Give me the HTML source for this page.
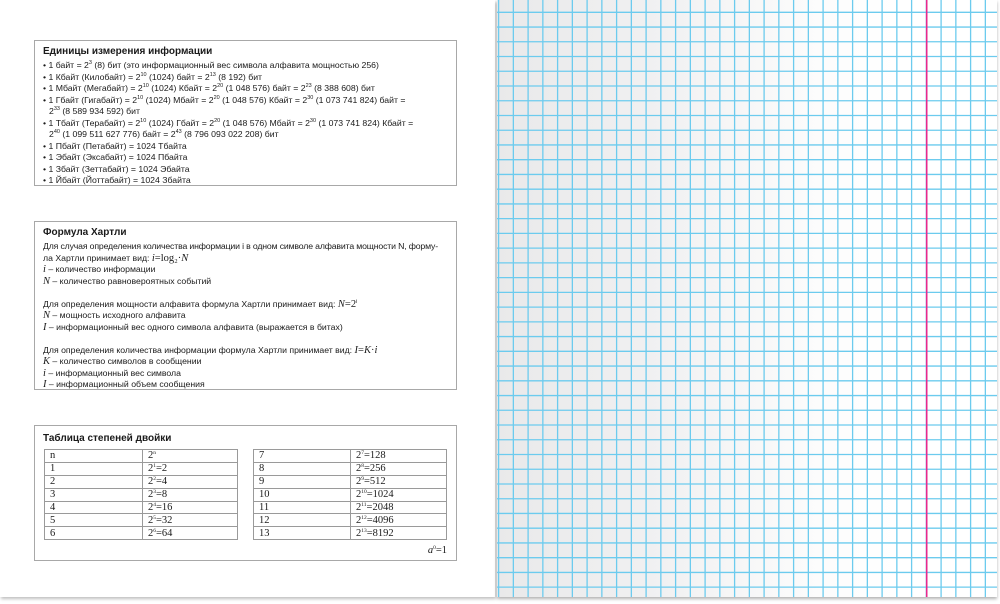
<!DOCTYPE html>
<html><head><meta charset="utf-8"><style>
*{margin:0;padding:0;box-sizing:border-box}
body{width:1000px;height:604px;background:#fff;position:relative;overflow:hidden;font-family:"Liberation Sans","DejaVu Sans",sans-serif;color:#1a1a1a}
.left{position:absolute;left:0;top:0;width:495px;height:597px;background:#fff;box-shadow:1px 2px 3px rgba(0,0,0,.25)}
.box{position:absolute;left:34px;width:423px;border:1px solid #a8a8a8;background:#fff;font-size:8.7px;line-height:11.5px;padding:4px 8px 0 8px;white-space:nowrap}
.box div,.box li{height:11.5px;overflow:visible}
.box h3{font-size:10px;font-weight:bold;margin:0 0 1px 0;line-height:14px}
.box ul{list-style:none}
.box li:before{content:"• ";}
.ind{padding-left:6px}
sup{font-size:5.5px;line-height:0;vertical-align:4px}
.m{font-family:"Liberation Serif","DejaVu Serif",serif;font-style:italic;font-size:10.5px;line-height:0}
.mr{font-family:"Liberation Serif",serif;font-size:10.5px;line-height:0}
table{position:absolute;border-collapse:collapse;font-family:"Liberation Serif",serif;font-size:10.5px}
td{border:1px solid #9a9a9a;height:12.9px;line-height:11px;padding:0 0 0 5px;vertical-align:middle}
.right{position:absolute;left:497px;top:0;width:500px;height:597px;background:linear-gradient(90deg,#e9e9ea 0%,#f0f0f1 30%,#fcfcfc 65%,#fff 80%);box-shadow:0 2px 3px rgba(0,0,0,.3)}
</style></head><body>
<div class="left">
<div class="box" style="top:40px;height:146px">
<h3>Единицы измерения информации</h3>
<ul>
<li>1 байт = 2<sup>3</sup> (8) бит (это информационный вес символа алфавита мощностью 256)</li>
<li>1 Кбайт (Килобайт) = 2<sup>10</sup> (1024) байт = 2<sup>13</sup> (8 192) бит</li>
<li>1 Мбайт (Мегабайт) = 2<sup>10</sup> (1024) Кбайт = 2<sup>20</sup> (1 048 576) байт = 2<sup>23</sup> (8 388 608) бит</li>
<li>1 Гбайт (Гигабайт) = 2<sup>10</sup> (1024) Мбайт = 2<sup>20</sup> (1 048 576) Кбайт = 2<sup>30</sup> (1 073 741 824) байт =</li>
<div class="ind">2<sup>33</sup> (8 589 934 592) бит</div>
<li>1 Тбайт (Терабайт) = 2<sup>10</sup> (1024) Гбайт = 2<sup>20</sup> (1 048 576) Мбайт = 2<sup>30</sup> (1 073 741 824) Кбайт =</li>
<div class="ind">2<sup>40</sup> (1 099 511 627 776) байт = 2<sup>43</sup> (8 796 093 022 208) бит</div>
<li>1 Пбайт (Петабайт) = 1024 Тбайта</li>
<li>1 Эбайт (Эксабайт) = 1024 Пбайта</li>
<li>1 Збайт (Зеттабайт) = 1024 Эбайта</li>
<li>1 Йбайт (Йоттабайт) = 1024 Збайта</li>
</ul>
</div>
<div class="box" style="top:221px;height:169px">
<h3>Формула Хартли</h3>
<div style="letter-spacing:-0.15px">Для случая определения количества информации i в одном символе алфавита мощности N, форму-</div>
<div>ла Хартли принимает вид: <span class="m">i</span><span class="mr">=log₂·</span><span class="m">N</span></div>
<div><span class="m">i</span> – количество информации</div>
<div><span class="m">N</span> – количество равновероятных событий</div>
<div>&nbsp;</div>
<div>Для определения мощности алфавита формула Хартли принимает вид: <span class="m">N</span><span class="mr">=2</span><sup>i</sup></div>
<div><span class="m">N</span> – мощность исходного алфавита</div>
<div><span class="m">I</span> – информационный вес одного символа алфавита (выражается в битах)</div>
<div>&nbsp;</div>
<div>Для определения количества информации формула Хартли принимает вид: <span class="m">I</span><span class="mr">=</span><span class="m">K</span><span class="mr">·</span><span class="m">i</span></div>
<div><span class="m">K</span> – количество символов в сообщении</div>
<div><span class="m">i</span> – информационный вес символа</div>
<div><span class="m">I</span> – информационный объем сообщения</div>
</div>
<div class="box" style="top:425px;height:136px">
<h3 style="margin-top:2px">Таблица степеней двойки</h3>
<div class="m" style="position:absolute;right:9px;bottom:4px;font-size:10.5px;line-height:11px">a<sup style="font-style:normal">0</sup><span style="font-style:normal">=1</span></div>
</div>
<table style="left:44px;top:449px;width:194px">
<tr><td style="width:98px">n</td><td>2<sup>n</sup></td></tr>
<tr><td>1</td><td>2<sup>1</sup>=2</td></tr>
<tr><td>2</td><td>2<sup>2</sup>=4</td></tr>
<tr><td>3</td><td>2<sup>3</sup>=8</td></tr>
<tr><td>4</td><td>2<sup>4</sup>=16</td></tr>
<tr><td>5</td><td>2<sup>5</sup>=32</td></tr>
<tr><td>6</td><td>2<sup>6</sup>=64</td></tr>
</table>
<table style="left:253px;top:449px;width:194px">
<tr><td style="width:97px">7</td><td>2<sup>7</sup>=128</td></tr>
<tr><td>8</td><td>2<sup>8</sup>=256</td></tr>
<tr><td>9</td><td>2<sup>9</sup>=512</td></tr>
<tr><td>10</td><td>2<sup>10</sup>=1024</td></tr>
<tr><td>11</td><td>2<sup>11</sup>=2048</td></tr>
<tr><td>12</td><td>2<sup>12</sup>=4096</td></tr>
<tr><td>13</td><td>2<sup>13</sup>=8192</td></tr>
</table>
</div>
<div class="right">
<svg width="500" height="597" style="position:absolute;left:0;top:0">
<g stroke="#6ccbee" stroke-width="1.3" id="g"></g>
<line x1="429.7" y1="0" x2="429.7" y2="597" stroke="#e8288c" stroke-width="1.6"/>
</svg>
</div>
<script>
var g=document.getElementById('g'),s='';
for(var k=0;k<34;k++){var x=1.6+14.75*k;s+='<line x1="'+x+'" y1="0" x2="'+x+'" y2="597"/>';}
for(var k=0;k<41;k++){var y=12.3+14.74*k;s+='<line x1="0" y1="'+y+'" x2="500" y2="'+y+'"/>';}
g.innerHTML=s;
</script>
</body></html>
